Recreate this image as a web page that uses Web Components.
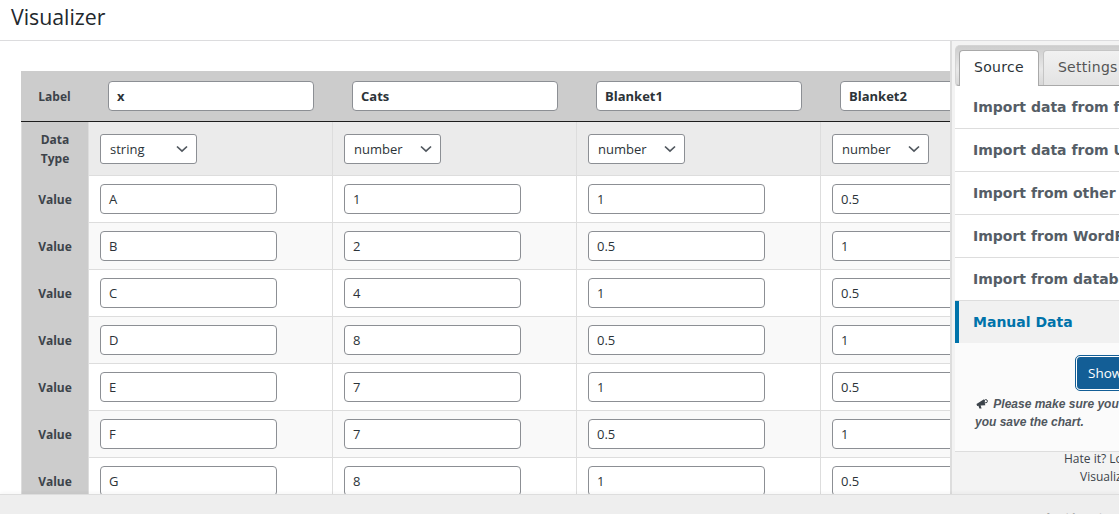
<!DOCTYPE html>
<html lang="en">
<head>
<meta charset="utf-8">
<title>Visualizer</title>
<style>
html, body { margin: 0; height: 100%; overflow: hidden; background: #fff; }
body { font-family: "Open Sans", "Noto Sans", sans-serif; color: #2c3338; }
</style>
</head>
<body>
<vz-app>
	<vz-table slot="main">
		<vz-row kind="label" head="Label">
			<vz-field bold>x</vz-field><vz-field bold>Cats</vz-field><vz-field bold>Blanket1</vz-field><vz-field bold>Blanket2</vz-field>
		</vz-row>
		<vz-row kind="type" head="Data Type">
			<vz-select>string</vz-select><vz-select>number</vz-select><vz-select>number</vz-select><vz-select>number</vz-select>
		</vz-row>
		<vz-row head="Value"><vz-field>A</vz-field><vz-field>1</vz-field><vz-field>1</vz-field><vz-field>0.5</vz-field></vz-row>
		<vz-row head="Value" alt><vz-field>B</vz-field><vz-field>2</vz-field><vz-field>0.5</vz-field><vz-field>1</vz-field></vz-row>
		<vz-row head="Value"><vz-field>C</vz-field><vz-field>4</vz-field><vz-field>1</vz-field><vz-field>0.5</vz-field></vz-row>
		<vz-row head="Value" alt><vz-field>D</vz-field><vz-field>8</vz-field><vz-field>0.5</vz-field><vz-field>1</vz-field></vz-row>
		<vz-row head="Value"><vz-field>E</vz-field><vz-field>7</vz-field><vz-field>1</vz-field><vz-field>0.5</vz-field></vz-row>
		<vz-row head="Value" alt><vz-field>F</vz-field><vz-field>7</vz-field><vz-field>0.5</vz-field><vz-field>1</vz-field></vz-row>
		<vz-row head="Value"><vz-field>G</vz-field><vz-field>8</vz-field><vz-field>1</vz-field><vz-field>0.5</vz-field></vz-row>
	</vz-table>
	<vz-panel slot="side">
		<vz-section>Import data from file</vz-section>
		<vz-section>Import data from URL</vz-section>
		<vz-section>Import from other chart</vz-section>
		<vz-section>Import from WordPress</vz-section>
		<vz-section>Import from database</vz-section>
		<vz-section active>Manual Data</vz-section>
	</vz-panel>
</vz-app>

<script>
class VzApp extends HTMLElement{
	constructor(){
		super();
		this.attachShadow({mode: 'open'});
		this.shadowRoot.innerHTML = `
		<style>
		:host{
			display: flex;
			flex-direction: column;
			height: 514px;
			width: 1119px;
			overflow: hidden;
		}
		header{
			flex: none;
			height: 40px;
			border-bottom: 1px solid #dcdcde;
			font-size: 21.3px;
			line-height: 33px;
			padding-left: 11px;
			color: #23282d;
		}
		.body{
			flex: 1;
			min-height: 0;
			display: flex;
		}
		.main{
			width: 950px;
			flex: none;
			overflow: hidden;
			padding: 30px 0 0 21px;
			box-sizing: border-box;
		}
		.side{
			flex: 1;
			min-width: 0;
		}
		footer{
			flex: none;
			height: 19px;
			box-sizing: content-box;
			background: #eeeeee;
			border-top: 1px solid #dddddd;
			overflow: hidden;
			padding-left: 1042px;
			font: 20px/24px "Open Sans", sans-serif;
			color: #a8a8a8;
			white-space: nowrap;
			box-shadow: 0 -2px 3px rgba(0,0,0,.03);
			position: relative;
		}
		footer span{
			display: block;
			margin-top: 13px;
		}
		</style>
		<header>Visualizer</header>
		<div class="body">
			<div class="main"><slot name="main"></slot></div>
			<div class="side"><slot name="side"></slot></div>
		</div>
		<footer><span>Activate Windows</span></footer>`;
	}
}

class VzTable extends HTMLElement{
	constructor(){
		super();
		this.attachShadow({mode: 'open'});
		this.shadowRoot.innerHTML = `
		<style>
		:host{
			display: flex;
			flex-direction: column;
			width: max-content;
		}
		</style>
		<slot></slot>`;
	}
}

class VzRow extends HTMLElement{
	constructor(){
		super();
		this.attachShadow({mode: 'open'});
		const head = this.getAttribute('head');
		this.shadowRoot.innerHTML = `
		<style>
		:host{
			display: grid;
			grid-template-columns: 68px repeat(4, 244px);
			height: 47px;
			box-sizing: border-box;
			border-bottom: 1px solid #dddddd;
			background: #fff;
		}
		:host([alt]){
			background: #f9f9f9;
		}
		:host([kind="label"]){
			height: 51px;
			background: #cccccc;
			border-bottom: 1px solid #1d1d1d;
		}
		:host([kind="type"]){
			height: 54px;
			background: #ebebeb;
		}
		.head{
			display: flex;
			align-items: center;
			justify-content: center;
			text-align: center;
			background: #cccccc;
			font-size: 12px;
			font-weight: 700;
			line-height: 19px;
			color: #3c434a;
			border-left: 1px solid #dddddd;
			border-right: 1px solid #dddddd;
			margin-bottom: -1px;
			padding: 0 8px;
		}
		:host([kind="label"]) .head{
			border: 0;
			margin: 0;
			padding: 0 9px 0 8px;
		}
		::slotted(*){
			border-right: 1px solid #dddddd;
			margin-bottom: -1px;
		}
		:host(:not([kind])) ::slotted(*){
			padding-bottom: 1px;
		}
		:host([kind="label"]) ::slotted(*){
			border-right: 0;
			margin-bottom: 0;
			padding-left: 19px;
		}
		</style>
		<div class="head">${head}</div>
		<slot></slot>`;
	}
}

class VzField extends HTMLElement{
	constructor(){
		super();
		this.attachShadow({mode: 'open'});
		this.shadowRoot.innerHTML = `
		<style>
		:host{
			display: flex;
			align-items: center;
			padding-left: 11px;
			min-width: 0;
		}
		.box{
			width: 177px;
			height: 30px;
			box-sizing: border-box;
			background: #fff;
			border: 1px solid #8c8f94;
			border-radius: 4px;
			padding: 0 8px;
			font-size: 13px;
			line-height: 28px;
			color: #2c3338;
			white-space: nowrap;
			overflow: hidden;
		}
		:host([bold]) .box{
			width: 206px;
			font-weight: 700;
		}
		</style>
		<div class="box"><slot></slot></div>`;
	}
}

class VzSelect extends HTMLElement{
	constructor(){
		super();
		this.attachShadow({mode: 'open'});
		this.shadowRoot.innerHTML = `
		<style>
		:host{
			display: flex;
			align-items: center;
			padding-left: 11px;
		}
		.box{
			width: 97px;
			height: 30px;
			box-sizing: border-box;
			background: #fff;
			border: 1px solid #8c8f94;
			border-radius: 3px;
			padding: 0 8px 0 9px;
			font-size: 13px;
			line-height: 28px;
			color: #2c3338;
			display: flex;
			justify-content: space-between;
			align-items: center;
		}
		svg{
			width: 12px;
			height: 8px;
		}
		</style>
		<div class="box"><span><slot></slot></span>
			<svg viewBox="0 0 12 8"><path d="M1 1.5 6 6.2 11 1.5" fill="none" stroke="#50575e" stroke-width="1.7"/></svg>
		</div>`;
	}
}

class VzPanel extends HTMLElement{
	constructor(){
		super();
		this.attachShadow({mode: 'open'});
		this.shadowRoot.innerHTML = `
		<style>
		:host{
			display: block;
			height: 100%;
			box-sizing: border-box;
			background: #f3f3f3;
			border-left: 2px solid #dddddd;
			padding: 4px 0 0 3px;
			overflow: hidden;
			position: relative;
		}
		.tabs{
			display: flex;
			gap: 4px;
			height: 41px;
			box-sizing: border-box;
			background: linear-gradient(#cdcdcd 0, #e8e8e8 60%, #d8d8d8 100%);
			border: 1px solid #d4d4d4;
			border-bottom: 1px solid #a9a9a9;
			border-radius: 5px 0 0 4px;
			padding: 4px 0 0 3px;
			width: 200px;
			font: 14px "DejaVu Sans", Verdana, sans-serif;
			letter-spacing: .3px;
		}
		.tab{
			height: 35px;
			box-sizing: border-box;
			padding: 0 14px;
			line-height: 32px;
			border: 1px solid #c5c5c5;
			border-bottom: 0;
			border-radius: 4px 4px 0 0;
			background: linear-gradient(#f1f1f1, #e3e3e3);
			color: #555;
			white-space: nowrap;
		}
		.tab.on{
			background: #fff;
			color: #2c3338;
			border-color: #a9a9a9;
			height: 36px;
		}
		.list{
			width: 200px;
			background: #fff;
		}
		.more{
			background: #fbfbfb;
			width: 200px;
			height: 109px;
			box-sizing: border-box;
			border-bottom: 1px solid #dddddd;
			position: relative;
		}
		.show{
			position: absolute;
			left: 121px;
			top: 13px;
			width: 90px;
			height: 34px;
			box-sizing: border-box;
			background: #135e96;
			color: #fff;
			border: 1px solid #fff;
			outline: 1.5px solid #135e96;
			border-radius: 4px;
			font: 13.5px/32px "Open Sans", sans-serif;
			padding-left: 11px;
		}
		.note{
			position: absolute;
			left: 20px;
			top: 52px;
			width: 250px;
			font: italic 700 12px/18px "Liberation Sans", Arial, sans-serif;
			color: #50575e;
		}
		.note svg{
			width: 12px;
			height: 11px;
			vertical-align: -1px;
			margin: 0 2px 0 1px;
		}
		.credit{
			font: 12px/18px "Open Sans", sans-serif;
			color: #3c434a;
			white-space: nowrap;
			margin-top: -2px;
			position: relative;
		}
		.credit div:first-child{
			padding-left: 109px;
		}
		.credit div:last-child{
			padding-left: 125px;
		}
		</style>
		<div class="tabs">
			<div class="tab on">Source</div>
			<div class="tab">Settings</div>
		</div>
		<div class="list"><slot></slot></div>
		<div class="more">
			<div class="show">Show</div>
			<div class="note"><svg viewBox="0 0 12 11"><path d="M0.5 6 8 1.2 9.3 7.2 4.6 7.6 5.6 10.6 3.4 10.6 2.4 7.8 1.1 8Z" fill="#3c434a"/><circle cx="9.8" cy="3.2" r="1.6" fill="none" stroke="#3c434a"/></svg> Please make sure you click Save<br>you save the chart.</div>
		</div>
		<div class="credit"><div>Hate it? Love it?</div><div>Visualizer</div></div>`;
	}
}

class VzSection extends HTMLElement{
	constructor(){
		super();
		this.attachShadow({mode: 'open'});
		this.shadowRoot.innerHTML = `
		<style>
		:host{
			display: block;
			height: 43px;
			box-sizing: border-box;
			border-bottom: 1px solid #dddddd;
			padding-left: 18px;
			font: 700 14px/42px "DejaVu Sans", Verdana, sans-serif;
			color: #555d66;
			white-space: nowrap;
			overflow: hidden;
			background: #fff;
		}
		:host([active]){
			height: 42px;
			border-bottom: 0;
			border-left: 4px solid #0073aa;
			padding-left: 14px;
			background: #f1f1f1;
			color: #0073aa;
		}
		</style>
		<slot></slot>`;
	}
}

customElements.define('vz-app', VzApp);
customElements.define('vz-table', VzTable);
customElements.define('vz-row', VzRow);
customElements.define('vz-field', VzField);
customElements.define('vz-select', VzSelect);
customElements.define('vz-panel', VzPanel);
customElements.define('vz-section', VzSection);
</script>
</body>
</html>
